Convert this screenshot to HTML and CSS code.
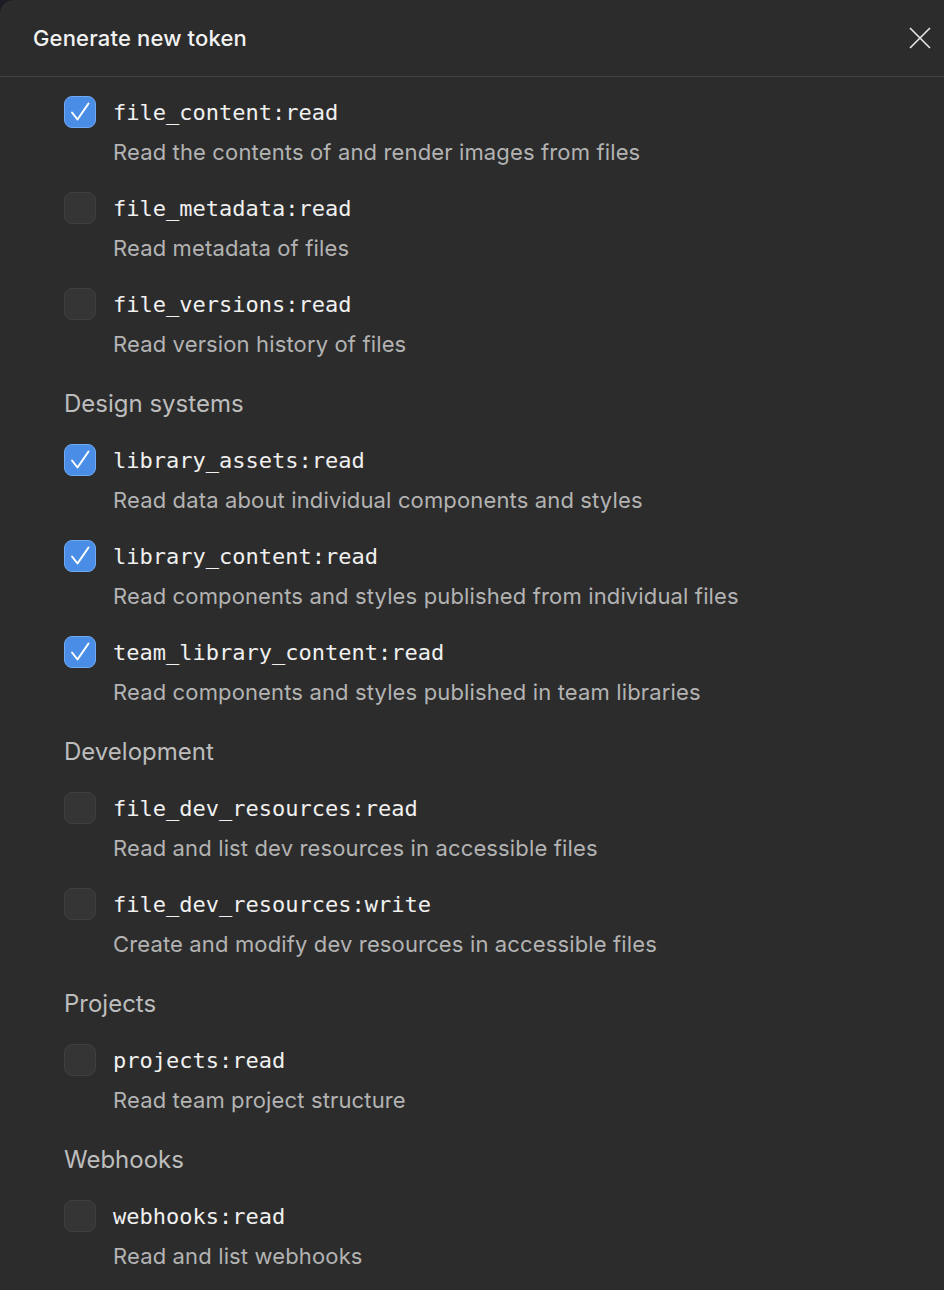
FILE: index.html
```html
<!DOCTYPE html>
<html lang="en">
<head>
<meta charset="utf-8">
<title>Generate new token</title>
<link rel="stylesheet" href="styles.css">
</head>
<body>
<div class="modal">
  <header class="modal-header">
    <h1 class="modal-title">Generate new token</h1>
    <button class="close" aria-label="Close">
      <svg width="24" height="24" viewBox="0 0 24 24"><path d="M2 2 L22 22 M22 2 L2 22" stroke="#e8e8e8" stroke-width="1.6" fill="none"/></svg>
    </button>
  </header>
  <div class="modal-body">
    <div class="scope">
      <span class="box checked"><svg width="32" height="32" viewBox="0 0 32 32"><path d="M8 16.5 L13.5 23.5 L24.5 7.5" stroke="#fff" stroke-width="2" fill="none" stroke-linecap="round" stroke-linejoin="round"/></svg></span>
      <code class="name">file_content:read</code>
      <p class="desc">Read the contents of and render images from files</p>
    </div>
    <div class="scope">
      <span class="box"></span>
      <code class="name">file_metadata:read</code>
      <p class="desc">Read metadata of files</p>
    </div>
    <div class="scope">
      <span class="box"></span>
      <code class="name">file_versions:read</code>
      <p class="desc">Read version history of files</p>
    </div>

    <h2 class="section">Design systems</h2>
    <div class="scope">
      <span class="box checked"><svg width="32" height="32" viewBox="0 0 32 32"><path d="M8 16.5 L13.5 23.5 L24.5 7.5" stroke="#fff" stroke-width="2" fill="none" stroke-linecap="round" stroke-linejoin="round"/></svg></span>
      <code class="name">library_assets:read</code>
      <p class="desc">Read data about individual components and styles</p>
    </div>
    <div class="scope">
      <span class="box checked"><svg width="32" height="32" viewBox="0 0 32 32"><path d="M8 16.5 L13.5 23.5 L24.5 7.5" stroke="#fff" stroke-width="2" fill="none" stroke-linecap="round" stroke-linejoin="round"/></svg></span>
      <code class="name">library_content:read</code>
      <p class="desc">Read components and styles published from individual files</p>
    </div>
    <div class="scope">
      <span class="box checked"><svg width="32" height="32" viewBox="0 0 32 32"><path d="M8 16.5 L13.5 23.5 L24.5 7.5" stroke="#fff" stroke-width="2" fill="none" stroke-linecap="round" stroke-linejoin="round"/></svg></span>
      <code class="name">team_library_content:read</code>
      <p class="desc">Read components and styles published in team libraries</p>
    </div>

    <h2 class="section">Development</h2>
    <div class="scope">
      <span class="box"></span>
      <code class="name">file_dev_resources:read</code>
      <p class="desc">Read and list dev resources in accessible files</p>
    </div>
    <div class="scope">
      <span class="box"></span>
      <code class="name">file_dev_resources:write</code>
      <p class="desc">Create and modify dev resources in accessible files</p>
    </div>

    <h2 class="section">Projects</h2>
    <div class="scope">
      <span class="box"></span>
      <code class="name">projects:read</code>
      <p class="desc">Read team project structure</p>
    </div>

    <h2 class="section">Webhooks</h2>
    <div class="scope">
      <span class="box"></span>
      <code class="name">webhooks:read</code>
      <p class="desc">Read and list webhooks</p>
    </div>
  </div>
</div>
</body>
</html>
```

FILE: styles.css
```css
* { box-sizing: border-box; }
html, body {
  margin: 0;
  padding: 0;
  background: #1b1c26;
  height: 100%;
  overflow: hidden;
}
.modal {
  background: #2c2c2c;
  border-top-left-radius: 14px;
  min-height: 1290px;
  width: 944px;
  font-family: Inter, "Noto Sans", sans-serif;
  color: #ececec;
}
.modal-header {
  height: 77px;
  border-bottom: 1px solid #444;
  display: flex;
  align-items: center;
  justify-content: space-between;
  padding: 0 12px 0 33px;
}
.modal-title {
  margin: 0;
  font-size: 22px;
  font-weight: 500;
  color: #f2f2f2;
  letter-spacing: 0.17px;
}
.close {
  background: none;
  border: 0;
  padding: 0;
  width: 24px;
  height: 24px;
  display: flex;
  cursor: pointer;
}
.modal-body {
  padding: 19px 0 0 64px;
  display: flex;
  flex-direction: column;
  gap: 24px;
}
.scope {
  display: grid;
  grid-template-columns: 32px 1fr;
  grid-template-rows: 32px 32px;
  column-gap: 17px;
  row-gap: 8px;
  align-items: center;
}
.box {
  position: relative;
  width: 32px;
  height: 32px;
  border-radius: 8px;
  background: #353535;
  border: 1.5px solid #3f3f3f;
}
.box svg {
  position: absolute;
  left: -1.5px;
  top: -1.5px;
}
.box.checked {
  background: #4a8de6;
  border-color: #6ea9f2;
}
.name {
  font-family: "DejaVu Sans Mono", "Liberation Mono", monospace;
  font-size: 22px;
  line-height: 34px;
  align-self: start;
  color: #f0f0f0;
}
.desc {
  grid-column: 2;
  margin: 0;
  font-size: 22px;
  line-height: 32px;
  letter-spacing: 0.14px;
  color: #b3b3b3;
}
.section {
  margin: 0;
  height: 36px;
  padding-top: 4px;
  font-size: 24px;
  line-height: 32px;
  font-weight: 400;
  color: #bdbdbd;
}
```
